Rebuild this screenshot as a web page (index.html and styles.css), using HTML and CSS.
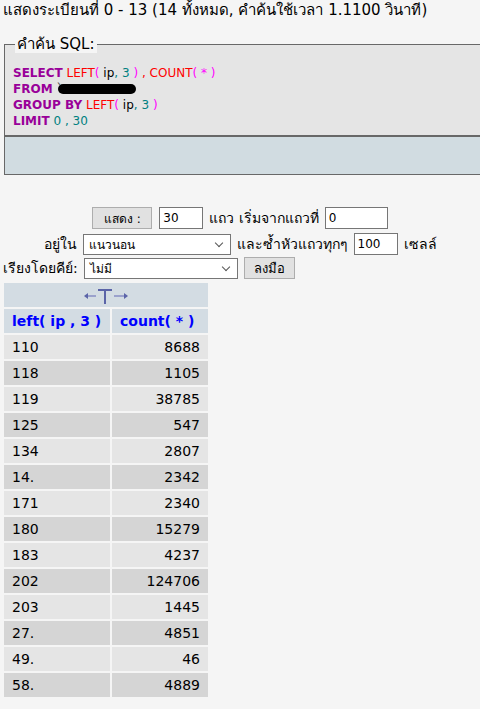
FILE: index.html
```html
<!DOCTYPE html>
<html lang="th">
<head>
  <meta charset="UTF-8">
  <title>phpMyAdmin - SQL result</title>
  <link rel="stylesheet" href="styles.css">
</head>
<body>
  <div class="notice">แสดงระเบียนที่ 0 - 13 (14 ทั้งหมด, คำค้นใช้เวลา 1.1100 วินาที)</div>

  <fieldset class="sql-box">
    <legend>คำค้น SQL:</legend>
    <div class="sql">
      <span class="kw">SELECT</span> <span class="fn">LEFT</span><span class="pr">(</span> ip<span class="nm">,</span> <span class="nm">3</span> <span class="pr">)</span> <span class="fn">,</span> <span class="fn">COUNT</span><span class="pr">( * )</span><br>
      <span class="kw">FROM</span> <span class="tick">`</span><span class="redact"></span><br>
      <span class="kw">GROUP BY</span> <span class="fn">LEFT</span><span class="pr">(</span> ip<span class="nm">,</span> <span class="nm">3</span> <span class="pr">)</span><br>
      <span class="kw">LIMIT</span> <span class="nm">0 , 30</span>
    </div>
  </fieldset>
  <div class="sql-footer"></div>

  <form class="nav-form">
    <div class="form-row">
      <button type="button" class="btn btn-show">แสดง :</button>
      <input type="text" class="field w44" value="30">
      <span>แถว เริ่มจากแถวที่</span>
      <input type="text" class="field w63" value="0">
    </div>
    <div class="form-row">
      <span>อยู่ใน</span>
      <div class="select w148">แนวนอน<span class="caret"></span></div>
      <span>และซ้ำหัวแถวทุกๆ</span>
      <input type="text" class="field w44" value="100">
      <span>เซลล์</span>
    </div>
  </form>

  <form class="sort-form">
    <span>เรียงโดยคีย์:</span>
    <div class="select w154">ไม่มี<span class="caret"></span></div>
    <button type="button" class="btn btn-go">ลงมือ</button>
  </form>

  <table class="data">
    <tr>
      <td colspan="2" class="sort-cell">
        <svg width="46" height="16" viewBox="0 0 46 16">
          <path d="M3 8h10" stroke="#9aa1cc" stroke-width="2"/>
          <path d="M1 8l4-3v6z" fill="#5b64a8"/>
          <path d="M15 2h14M22 2v14" stroke="#5b64a8" stroke-width="2"/>
          <path d="M31 8h10" stroke="#9aa1cc" stroke-width="2"/>
          <path d="M45 8l-4-3v6z" fill="#5b64a8"/>
        </svg>
      </td>
    </tr>
    <tr>
      <th class="col-a">left( ip , 3 )</th>
      <th class="col-b">count( * )</th>
    </tr>
    <tr class="odd"><td>110</td><td class="num">8688</td></tr>
    <tr class="even"><td>118</td><td class="num">1105</td></tr>
    <tr class="odd"><td>119</td><td class="num">38785</td></tr>
    <tr class="even"><td>125</td><td class="num">547</td></tr>
    <tr class="odd"><td>134</td><td class="num">2807</td></tr>
    <tr class="even"><td>14.</td><td class="num">2342</td></tr>
    <tr class="odd"><td>171</td><td class="num">2340</td></tr>
    <tr class="even"><td>180</td><td class="num">15279</td></tr>
    <tr class="odd"><td>183</td><td class="num">4237</td></tr>
    <tr class="even"><td>202</td><td class="num">124706</td></tr>
    <tr class="odd"><td>203</td><td class="num">1445</td></tr>
    <tr class="even"><td>27.</td><td class="num">4851</td></tr>
    <tr class="odd"><td>49.</td><td class="num">46</td></tr>
    <tr class="even"><td>58.</td><td class="num">4889</td></tr>
  </table>
</body>
</html>
```

FILE: styles.css
```css
html {
  overflow: hidden;
}

body {
  margin: 0;
  padding: 0 0 0 4px;
  background-color: #f5f5f5;
  color: #000;
  font-family: "DejaVu Sans", "Noto Sans", sans-serif;
  font-size: 14px;
  width: 600px;
}

.notice {
  margin-left: -1px;
  font-size: 15px;
  line-height: 20px;
}

.sql-box {
  margin: 15px 0 0 0;
  width: 560px;
  padding: 12px 8px 6px 8px;
  border: 1px solid #686868;
  background-color: #e5e5e5;
}

.sql-box legend {
  padding: 0 2px;
  margin-left: 2px;
  font-size: 15px;
  line-height: 18px;
  background-color: #f5f5f5;
}

.sql {
  font-size: 12px;
  line-height: 16px;
}

.kw {
  color: #990099;
  font-weight: bold;
}

.fn {
  color: #ff0000;
}

.pr {
  color: #ff00ff;
}

.nm {
  color: #008080;
}

.tick {
  color: #444;
}

.redact {
  display: inline-block;
  width: 78px;
  height: 10px;
  margin-left: -4px;
  vertical-align: -1px;
  background-color: #000;
  border-radius: 5px;
}

.sql-footer {
  width: 576px;
  height: 37px;
  border: 1px solid #686868;
  background-color: #d1dce1;
}

.nav-form {
  margin-top: 32px;
  margin-left: -4px;
  width: 480px;
}

.form-row {
  display: flex;
  justify-content: center;
  align-items: center;
  gap: 6px;
  margin-bottom: 4px;
  font-size: 14px;
}

.btn {
  height: 22px;
  padding: 0;
  border: 1px solid #adadad;
  background-color: #e1e1e1;
  font-family: inherit;
  font-size: 12px;
  color: #000;
}

.btn-show {
  width: 60px;
  margin-right: 1px;
}

.btn-go {
  width: 51px;
  font-size: 13px;
}

.field {
  box-sizing: border-box;
  height: 22px;
  padding: 0 3px;
  border: 1px solid #767676;
  background-color: #fff;
  font-family: inherit;
  font-size: 12px;
}

.w44 { width: 44px; }
.w63 { width: 63px; }
.w148 { width: 148px; }
.w154 { width: 154px; }

.select {
  position: relative;
  box-sizing: border-box;
  height: 21px;
  padding: 2px 5px;
  border: 1px solid #767676;
  background-color: #fff;
  font-size: 12px;
  line-height: 16px;
}

.caret {
  position: absolute;
  right: 8px;
  top: 5px;
  width: 5px;
  height: 5px;
  border-right: 1px solid #555;
  border-bottom: 1px solid #555;
  transform: rotate(45deg);
}

.sort-form {
  display: flex;
  align-items: center;
  gap: 6px;
  margin-top: -2px;
  margin-left: -1px;
  font-size: 14px;
}

.data {
  margin-top: 2px;
  margin-left: -2px;
  border-spacing: 2px;
}

.data td,
.data th {
  padding: 0 8px;
  height: 24px;
  line-height: 24px;
}

.sort-cell {
  background-color: #d3dce3;
  text-align: center;
  height: 23px;
}

.sort-cell svg {
  vertical-align: middle;
}

.data th {
  background-color: #d3dce3;
  color: #0000ff;
  font-weight: bold;
  text-align: left;
  font-size: 14px;
  height: 23px;
}

.col-a {
  width: 90px;
}

.col-b {
  width: 80px;
}

.odd td {
  background-color: #e5e5e5;
}

.even td {
  background-color: #d5d5d5;
}

.num {
  text-align: right;
}
```
